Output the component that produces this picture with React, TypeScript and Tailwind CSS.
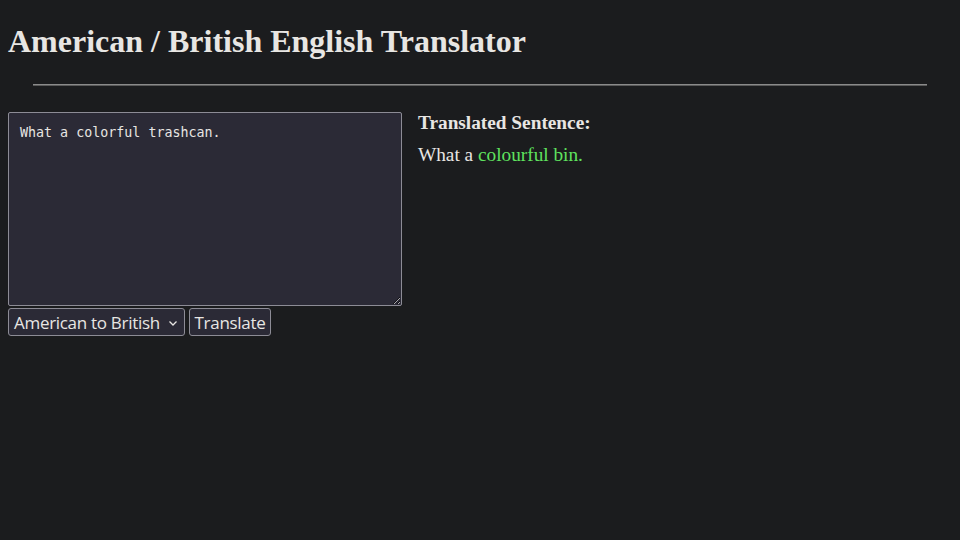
import React from "react";

export default function App() {
  return (
    <div className="min-h-screen bg-[#1b1c1e] px-2 text-[#e8e6e3]">
      <h1 className="m-0 pt-[24px] text-[32px] font-bold leading-[35px] [font-family:'Liberation_Serif',serif]">
        American / British English Translator
      </h1>
      <div className="mx-[25px] mt-[25px] h-[2px] border-t border-t-[#8a8a8a] border-b border-b-[#5a5a5a]" />
      <div className="mt-[26px] flex gap-4">
        <div className="flex w-[394px] flex-col gap-[2px]">
          <textarea
            className="h-[194px] w-[394px] resize-y rounded-[2px] border border-[#8d8c96] bg-[#2b2a36] px-[11px] py-[12px] text-[13.33px] leading-[16px] text-[#e8e6e3] outline-none [font-family:'DejaVu_Sans_Mono',monospace]"
            defaultValue="What a colorful trashcan."
          />
          <div className="flex gap-1 [font-family:'Open_Sans',sans-serif]">
            <div className="flex h-[28px] w-[177px] items-center justify-between whitespace-nowrap rounded-[3px] border border-[#8d8c96] bg-[#2b2a36] pl-[5px] pr-[5px] text-[17px] text-[#e8e6e3]">
              <span className="leading-none tracking-[-0.3px]">American to British</span>
              <svg width="10" height="7" viewBox="0 0 10 7" className="mr-[1px] mt-[2px]">
                <path d="M1.5 1.5 L5 5 L8.5 1.5" fill="none" stroke="#e8e6e3" strokeWidth="1.3" />
              </svg>
            </div>
            <div className="flex h-[28px] w-[82px] items-center justify-center whitespace-nowrap rounded-[3px] border border-[#8d8c96] bg-[#2b2a36] text-[17px] text-[#e8e6e3]">
              <span className="leading-none tracking-[-0.3px]">Translate</span>
            </div>
          </div>
        </div>
        <div className="[font-family:'Liberation_Serif',serif]">
          <h3 className="m-0 text-[19.3px] font-bold leading-[22px]">Translated Sentence:</h3>
          <div className="mt-[9.5px] text-[19.3px] leading-[22px]">
            What a <span className="text-[#5fe25f]">colourful</span> <span className="text-[#5fe25f]">bin.</span>
          </div>
        </div>
      </div>
    </div>
  );
}
